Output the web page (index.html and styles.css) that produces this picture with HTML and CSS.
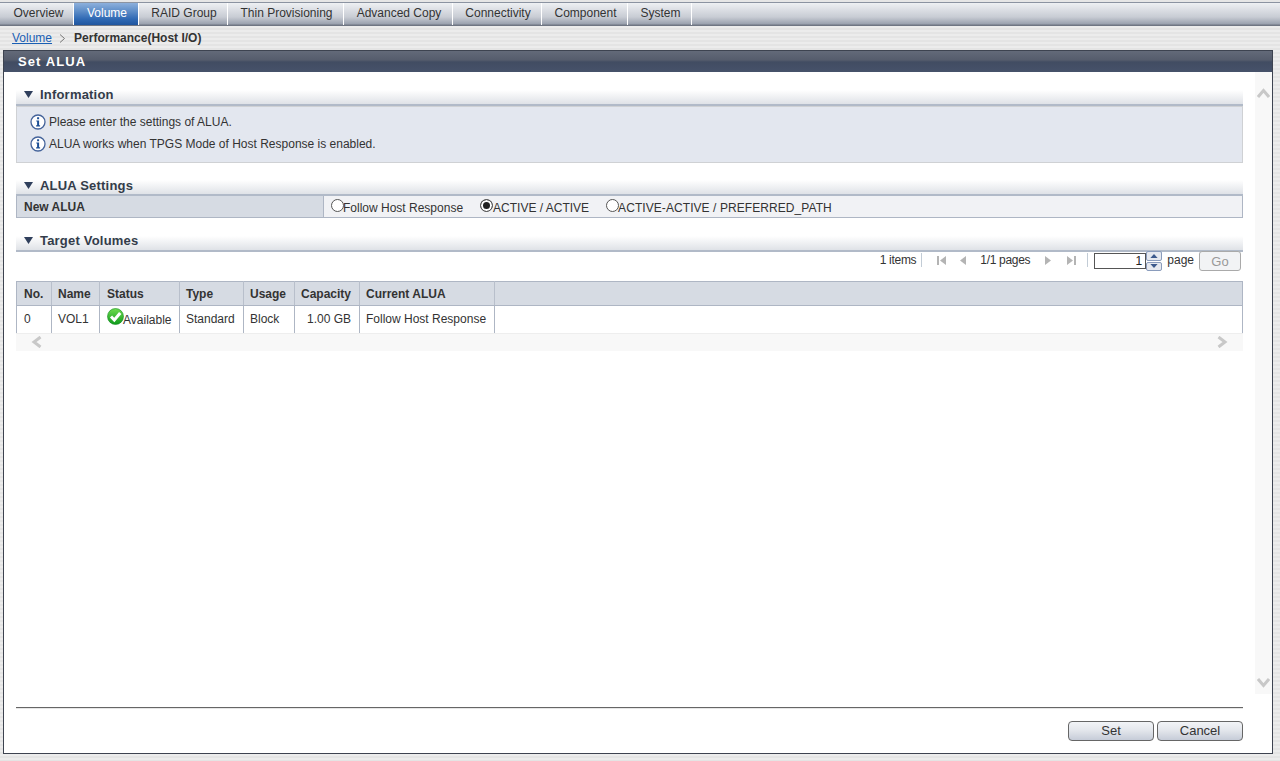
FILE: index.html
```html
<!DOCTYPE html>
<html lang="en">
<head>
<meta charset="utf-8">
<title>Set ALUA</title>
<link rel="stylesheet" href="styles.css">
</head>
<body>
<nav class="tabs">
  <a class="tab t1">Overview</a>
  <a class="tab t2 active">Volume</a>
  <a class="tab t3">RAID Group</a>
  <a class="tab t4">Thin Provisioning</a>
  <a class="tab t5">Advanced Copy</a>
  <a class="tab t6">Connectivity</a>
  <a class="tab t7">Component</a>
  <a class="tab t8">System</a>
</nav>
<div class="crumbs">
  <a class="crumb-link">Volume</a>
  <svg class="crumb-sep" width="7" height="9" viewBox="0 0 7 9"><path d="M1 .5 5.5 4.5 1 8.5" fill="none" stroke="#777" stroke-width="1"/></svg>
  <b>Performance(Host I/O)</b>
</div>
<main class="window">
  <h1 class="title">Set ALUA</h1>
  <div class="work">
    <div class="content">
      <section class="sec sec-info">
        <h2 class="sec-head"><svg class="tri" width="9" height="7" viewBox="0 0 9 7"><path d="M0 0H9L4.500 7Z" fill="#2f3f5c"/></svg>Information</h2>
        <div class="info">
          <p class="info-line"><svg class="i-icon" width="16" height="16" viewBox="0 0 16 16"><circle cx="8" cy="8" r="7" fill="#fff" stroke="#44639a" stroke-width="1.300"/><path d="M6.300 6.400H9.100V11.200H10.100V12.400H6.100V11.200H7.100V7.600H6.300Z M7.100 3.300H9.100V5.300H7.100Z" fill="#1c4f96"/></svg>Please enter the settings of ALUA.</p>
          <p class="info-line"><svg class="i-icon" width="16" height="16" viewBox="0 0 16 16"><circle cx="8" cy="8" r="7" fill="#fff" stroke="#44639a" stroke-width="1.300"/><path d="M6.300 6.400H9.100V11.200H10.100V12.400H6.100V11.200H7.100V7.600H6.300Z M7.100 3.300H9.100V5.300H7.100Z" fill="#1c4f96"/></svg>ALUA works when TPGS Mode of Host Response is enabled.</p>
        </div>
      </section>
      <section class="sec sec-set">
        <h2 class="sec-head"><svg class="tri" width="9" height="7" viewBox="0 0 9 7"><path d="M0 0H9L4.500 7Z" fill="#2f3f5c"/></svg>ALUA Settings</h2>
        <div class="form-row">
          <div class="form-label">New ALUA</div>
          <div class="form-value">
            <span class="radio r1"><span class="dot"></span>Follow Host Response</span>
            <span class="radio r2"><span class="dot on"></span>ACTIVE / ACTIVE</span>
            <span class="radio r3"><span class="dot"></span>ACTIVE-ACTIVE / PREFERRED_PATH</span>
          </div>
        </div>
      </section>
      <section class="sec sec-target">
        <h2 class="sec-head"><svg class="tri" width="9" height="7" viewBox="0 0 9 7"><path d="M0 0H9L4.500 7Z" fill="#2f3f5c"/></svg>Target Volumes</h2>
        <div class="pager">
          <span class="tight">1 items</span><span class="pipe"></span>
          <svg class="pg-first" width="9" height="9" viewBox="0 0 9 9"><path d="M0 0H2V9H0ZM9 0V9L3 4.500Z" fill="#b4b4b4"/></svg>
          <svg class="pg-prev" width="6" height="9" viewBox="0 0 6 9"><path d="M6 0V9L0 4.500Z" fill="#b4b4b4"/></svg>
          <span class="pg-count tight">1/1 pages</span>
          <svg class="pg-next" width="6" height="9" viewBox="0 0 6 9"><path d="M0 0V9L6 4.500Z" fill="#b4b4b4"/></svg>
          <svg class="pg-last" width="9" height="9" viewBox="0 0 9 9"><path d="M7 0H9V9H7ZM0 0V9L6 4.500Z" fill="#b4b4b4"/></svg>
          <span class="pipe pipe2"></span>
          <span class="page-input">1</span>
          <span class="spin">
            <span class="spin-btn"><svg width="8" height="4" viewBox="0 0 9 5"><path d="M4.500 0 9 5H0Z" fill="#3d5a8c"/></svg></span>
            <span class="spin-btn"><svg width="8" height="4" viewBox="0 0 9 5"><path d="M0 0H9L4.500 5Z" fill="#3d5a8c"/></svg></span>
          </span>
          <span class="page-word">page</span>
          <span class="go">Go</span>
        </div>
        <table class="grid">
          <thead>
            <tr><th class="c1">No.</th><th class="c2">Name</th><th class="c3">Status</th><th class="c4">Type</th><th class="c5">Usage</th><th class="c6">Capacity</th><th class="c7">Current ALUA</th><th></th></tr>
          </thead>
          <tbody>
            <tr>
              <td class="c1">0</td><td class="c2">VOL1</td>
              <td class="status"><svg class="ok" width="17" height="17" viewBox="0 0 17 17"><defs><linearGradient id="g" x1="0" y1="0" x2="0" y2="1"><stop offset="0" stop-color="#6fdc4f"/><stop offset="1" stop-color="#0f9a1c"/></linearGradient></defs><circle cx="8.500" cy="8.500" r="8" fill="url(#g)" stroke="#0f8a1c" stroke-width=".6"/><path d="M4 8.500 7.300 12 13.200 5" fill="none" stroke="#fff" stroke-width="3"/></svg>Available</td>
              <td class="c4">Standard</td><td class="c5">Block</td><td class="num">1.00 GB</td><td class="c7">Follow Host Response</td><td></td>
            </tr>
          </tbody>
        </table>
        <div class="hscroll">
          <svg width="12" height="12" viewBox="0 0 12 12"><path d="M9.500 1 3 6 9.500 11" fill="none" stroke="#c8c8c8" stroke-width="3"/></svg>
          <svg width="12" height="12" viewBox="0 0 12 12"><path d="M2.500 1 9 6 2.500 11" fill="none" stroke="#c8c8c8" stroke-width="3"/></svg>
        </div>
      </section>
    </div>
    <div class="vscroll">
      <svg width="13" height="11" viewBox="0 0 13 11"><path d="M1 9 6.500 2.500 12 9" fill="none" stroke="#c8c8c8" stroke-width="3"/></svg>
      <svg width="13" height="11" viewBox="0 0 13 11"><path d="M1 2 6.500 8.500 12 2" fill="none" stroke="#c8c8c8" stroke-width="3"/></svg>
    </div>
  </div>
  <footer class="foot">
    <div class="foot-btns">
      <span class="btn">Set</span>
      <span class="btn">Cancel</span>
    </div>
  </footer>
</main>
</body>
</html>
```

FILE: styles.css
```css
* { box-sizing: border-box; }
html, body { margin: 0; height: 761px; overflow: hidden; }
body {
  font: 12px "Liberation Sans", Arial, sans-serif;
  color: #333;
  display: flex;
  flex-direction: column;
  background: repeating-linear-gradient(180deg, #e4e4e4 0, #e4e4e4 2px, #ececec 2px, #ececec 4px);
}
p, h1, h2 { margin: 0; }

/* tabs */
.tabs {
  height: 26px;
  display: flex;
  padding: 2px 0 0 0;
  background: linear-gradient(180deg, #e6e6e6 0, #e6e6e6 2px, #8b93a1 2px, #8b93a1 3px, #eef0f3 3px, #c8ccd4 17px, #9aa1ae 24px, #6f7683 25px, #6f7683 26px);
}
.tab {
  display: flex;
  align-items: center;
  justify-content: center;
  height: 22px;
  margin-top: 1px;
  color: #333;
  border-right: 1px solid #fff;
  padding: 0 0 2px 2px;
}
.t1 { width: 74px; padding-left: 4px; }
.t2 { width: 65px; }
.t3 { width: 89px; }
.t4 { width: 116px; }
.t5 { width: 109px; }
.t6 { width: 89px; }
.t7 { width: 86px; }
.t8 { width: 64px; }
.tab.active {
  color: #fff;
  background: linear-gradient(180deg, #8db0dc 0, #5f8ec8 8px, #2f69b4 16px, #1f559e 22px);
}

/* breadcrumb */
.crumbs {
  height: 24px;
  display: flex;
  align-items: center;
  color: #333;
  padding: 0 0 0 12px;
}
.crumb-link { color: #1a5fb4; text-decoration: underline; }
.crumb-sep { margin: 0 8px 0 7px; }

/* window */
.window {
  width: 1270px;
  height: 704px;
  margin-left: 3px;
  border: 1px solid #3d4350;
  background: #fff;
  display: flex;
  flex-direction: column;
}
.title {
  height: 21px;
  flex: none;
  padding-left: 14px;
  color: #fff;
  font-size: 13px;
  font-weight: bold;
  letter-spacing: 1.1px;
  line-height: 21px;
  background: linear-gradient(180deg, #636a79 0, #555c6c 9px, #414c62 11px, #46526a 21px);
}
.work { flex: none; height: 622px; display: flex; }
.content { width: 1252px; padding-left: 12px; }
.vscroll {
  width: 17px;
  margin-left: -1px;
  background: #f8f8f8;
  display: flex;
  flex-direction: column;
  justify-content: space-between;
  align-items: center;
  padding: 16px 0 6px;
}

/* sections */
.sec { width: 1227px; }
.sec-info { margin-top: 13px; }
.sec-set { margin-top: 12px; }
.sec-target { margin-top: 13px; }
.sec-head {
  height: 21px;
  display: flex;
  align-items: center;
  padding: 0 0 1px 8px;
  font-size: 13px;
  font-weight: bold;
  color: #333c4a;
  letter-spacing: .2px;
  background: linear-gradient(180deg, #fff 0, #fff 5px, #dfe2e7 19px);
  border-bottom: 2px solid #b1bac8;
}
.sec-set .sec-head { padding: 1px 0 0 8px; }
.tri { margin-right: 7px; }
.info {
  height: 57px;
  padding-top: 4px;
  background: #e3e7ef;
  border: 1px solid #cfd1d4;
}
.info-line { height: 22px; display: flex; align-items: center; padding-left: 13px; color: #333; }
.i-icon { margin-right: 3px; }
.form-row {
  height: 22px;
  display: flex;
  border: 1px solid #aeb6c4;
  border-top: 0;
}
.form-label {
  width: 307px;
  background: #d6dbe3;
  border-right: 1px solid #aeb6c4;
  font-weight: bold;
  line-height: 22px;
  padding-left: 7px;
}
.form-value { flex: 1; background: #f1f2f5; display: flex; align-items: center; padding: 2px 0 0 7px; }
.radio { display: flex; align-items: center; }
.r1 { margin-right: 17px; }
.r2 { margin-right: 17px; }
.r1 .dot, .r3 .dot { margin-right: -1px; }
.r3 { letter-spacing: .07px; }
.dot {
  width: 13px;
  height: 13px;
  border-radius: 50%;
  border: 1px solid #555;
  background: #fff;
  position: relative;
  top: -2px;
}
.dot.on { box-shadow: inset 0 0 0 2px #fff; background: #222; }

/* pager */
.pager {
  height: 20px;
  display: flex;
  align-items: center;
  justify-content: flex-end;
  padding: 0 2px 4px 0;
}
.tight { letter-spacing: -.3px; }
.pipe { width: 1px; height: 14px; background: #c2ccd6; margin: 0 15px 0 5px; }
.pipe2 { margin: 0 6px 0 11px; }
.pg-first { margin-right: 14px; }
.pg-prev { margin-right: 14px; }
.pg-count { margin-right: 15px; }
.pg-next { margin-right: 16px; }
.page-input {
  width: 52px;
  height: 16px;
  margin-top: 2px;
  border: 1px solid #555;
  text-align: right;
  padding-right: 3px;
  line-height: 14px;
  color: #222;
}
.spin { width: 16px; height: 20px; margin: 2px 5px 0 0; display: flex; flex-direction: column; gap: 1px; }
.spin-btn { flex: 1; display: flex; align-items: center; justify-content: center; background: #e6e9ef; border: 1px solid #8a9cbc; border-radius: 2px; }
.page-word { margin-right: 5px; }
.go {
  width: 42px;
  height: 20px;
  margin-top: 2px;
  border: 1px solid #aaa;
  border-radius: 3px;
  background: #f2f3f5;
  color: #999;
  font-size: 13px;
  text-align: center;
  line-height: 19px;
}

/* table */
.grid {
  width: 100%;
  margin-top: 9px;
  border-collapse: collapse;
  table-layout: fixed;
  border-left: 1px solid #aeb6c4;
  border-right: 1px solid #aeb6c4;
}
.grid th {
  height: 24px;
  background: #d6dbe3;
  border-top: 1px solid #aeb6c4;
  border-bottom: 1px solid #aeb6c4;
  border-right: 1px solid #b8bfcb;
  text-align: left;
  padding: 0 0 0 6px;
  color: #333;
}
.grid th:last-child, .grid td:last-child { border-right: 0; }
.grid td {
  height: 27px;
  padding: 0 0 0 6px;
  border-right: 1px solid #aeb6c4;
  color: #333;
  white-space: nowrap;
}
.grid .c1 { width: 35px; padding-left: 7px; }
.c2 { width: 48px; }
.grid .c3 { width: 80px; padding-left: 7px; }
.c4 { width: 64px; }
.c5 { width: 51px; }
.c6 { width: 65px; }
.c7 { width: 135px; }
.grid td.num { text-align: right; padding-right: 8px; }
.grid td.status { position: relative; padding-left: 23px; padding-top: 2px; }
.ok { position: absolute; left: 7px; top: 2px; }
.hscroll {
  height: 18px;
  background: #f8f8f8;
  border-top: 1px solid #eee;
  display: flex;
  align-items: center;
  justify-content: space-between;
  padding: 0 15px;
}

/* footer */
.foot {
  flex: 1;
  margin: 13px 29px 0 12px;
  border-top: 1px solid #666;
  box-shadow: inset 0 1px 0 #e6e6e6;
  padding-top: 13px;
}
.foot-btns { display: flex; justify-content: flex-end; gap: 3px; }
.btn {
  width: 86px;
  height: 20px;
  border: 1px solid #666;
  border-radius: 4px;
  text-align: center;
  font-size: 13px;
  line-height: 18px;
  color: #333;
  background: linear-gradient(180deg, #f2f4f7 0, #e4e7ec 45%, #c6ccd8 100%);
}
```
